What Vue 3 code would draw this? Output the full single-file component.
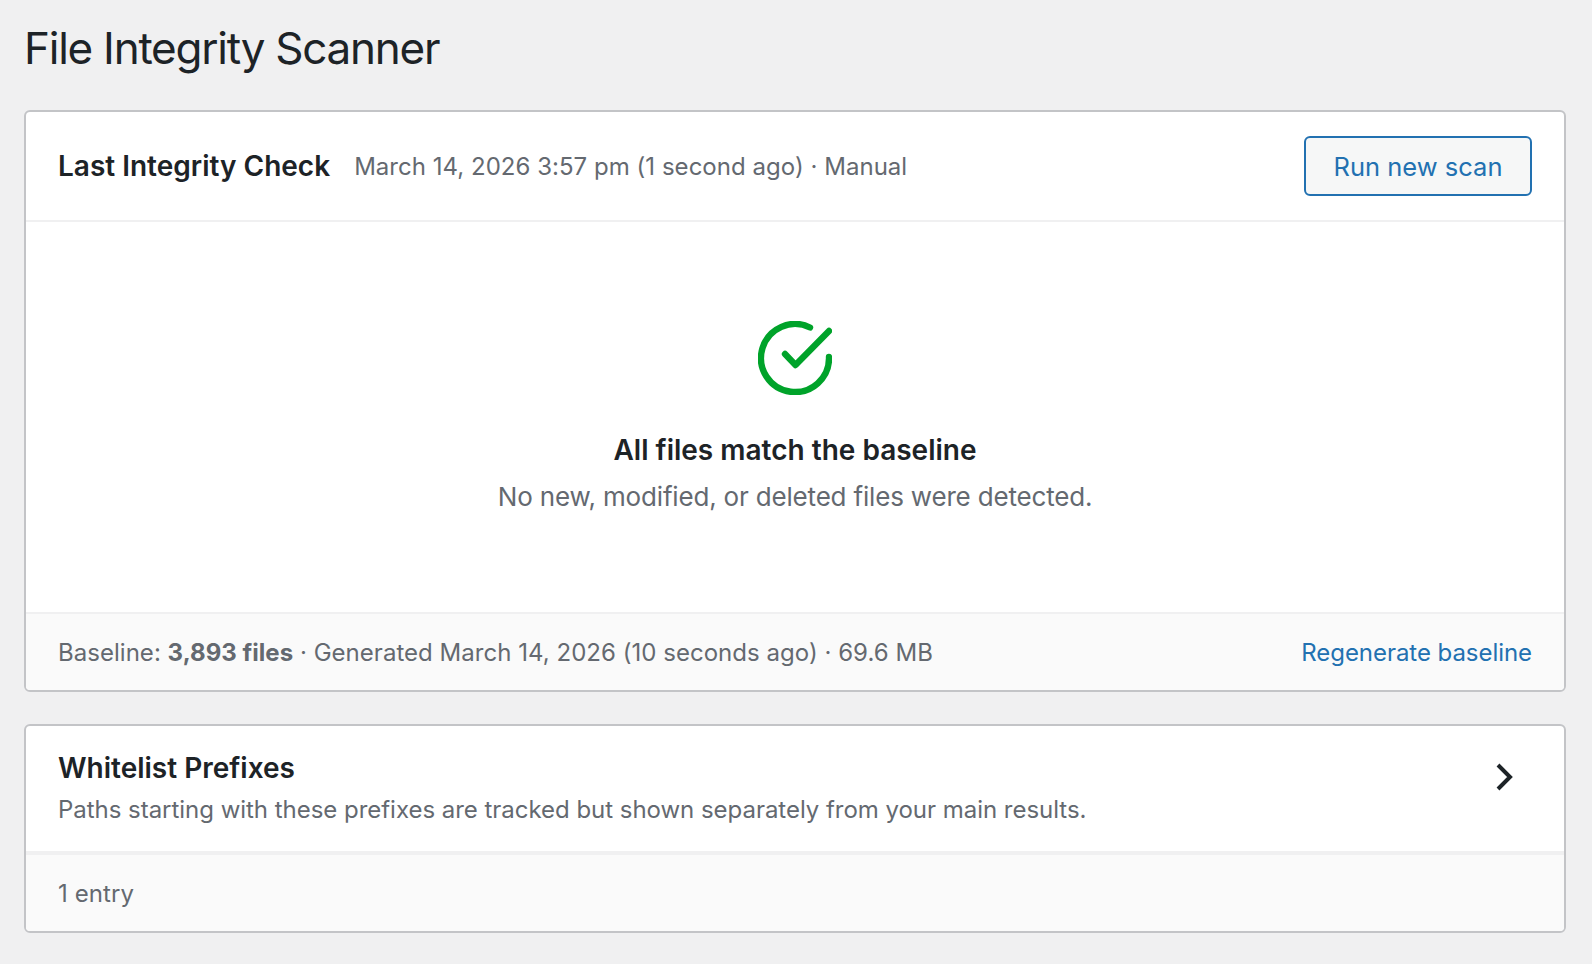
<template>
  <div class="page">
    <h1 class="page-title">File Integrity Scanner</h1>

    <section class="card">
      <header class="scan-head">
        <h2 class="scan-title">Last Integrity Check</h2>
        <span class="scan-meta">March 14, 2026 3:57 pm (1 second ago) · Manual</span>
        <button class="scan-btn" type="button">Run new scan</button>
      </header>

      <div class="scan-result">
        <svg class="check" viewBox="0 0 74 74" fill="none" stroke="#00a32a" stroke-width="6.4" stroke-linecap="round" stroke-linejoin="round">
          <path d="M52 6.5A34 34 0 1 0 71 36" />
          <path d="M27 33L37.5 44L71 10" />
        </svg>
        <h3 class="result-title">All files match the baseline</h3>
        <p class="result-text">No new, modified, or deleted files were detected.</p>
      </div>

      <footer class="card-foot">
        <span class="foot-text">Baseline: <strong>3,893 files</strong> · Generated March 14, 2026 (10 seconds ago) · 69.6 MB</span>
        <a class="foot-link" href="#">Regenerate baseline</a>
      </footer>
    </section>

    <section class="card">
      <div class="wl-head">
        <div>
          <h2 class="wl-title">Whitelist Prefixes</h2>
          <p class="wl-text">Paths starting with these prefixes are tracked but shown separately from your main results.</p>
        </div>
        <svg class="chevron" viewBox="0 0 18 28" fill="none" stroke="#1d2327" stroke-width="4">
          <path d="M2 2L14 14L2 26" />
        </svg>
      </div>
      <footer class="wl-foot">1 entry</footer>
    </section>
  </div>
</template>

<script setup>
</script>

<style>
html,
body {
  background: #f0f0f1;
}
</style>

<style scoped>
.page {
  padding: 21px 26px 32px 24px;
  font-family: Inter, "Liberation Sans", sans-serif;
  color: #1d2327;
}
.page-title {
  margin: 0 0 35px;
  font-size: 44px;
  font-weight: 400;
  line-height: 54px;
  letter-spacing: -1.25px;
}
.card {
  border: 2px solid #c3c4c7;
  border-radius: 6px;
  background: #fff;
  overflow: hidden;
  margin-bottom: 32px;
}
.scan-head {
  display: flex;
  align-items: center;
  height: 108px;
  padding: 0 32px;
  border-bottom: 2px solid #f0f0f1;
}
.scan-title {
  margin: 0 24px 0 0;
  font-size: 28px;
  font-weight: 600;
}
.scan-meta {
  flex: 1;
  font-size: 24px;
  letter-spacing: 0.03px;
  color: #646970;
}
.scan-btn {
  width: 228px;
  height: 60px;
  border: 2px solid #2271b1;
  border-radius: 6px;
  background: #f6f7f7;
  color: #2271b1;
  font: inherit;
  font-size: 25.5px;
}
.scan-result {
  display: flex;
  flex-direction: column;
  align-items: center;
  height: 390px;
  padding-top: 99px;
  box-sizing: border-box;
}
.check {
  width: 74px;
  height: 74px;
}
.result-title {
  margin: 38px 0 0;
  font-size: 28px;
  font-weight: 600;
}
.result-text {
  margin: 14px 0 0;
  font-size: 26px;
  letter-spacing: -0.18px;
  color: #646970;
}
.card-foot {
  display: flex;
  justify-content: space-between;
  align-items: center;
  height: 76px;
  padding: 0 32px;
  border-top: 2px solid #f0f0f1;
  background: #fafafa;
  font-size: 24px;
  color: #646970;
}
.foot-text {
  letter-spacing: 0.03px;
}
.foot-link {
  letter-spacing: -0.05px;
  color: #2271b1;
  text-decoration: none;
}
.wl-head {
  display: flex;
  justify-content: space-between;
  height: 125px;
  padding: 25px 50px 0 32px;
  box-sizing: border-box;
}
.wl-title {
  margin: 0;
  font-size: 28px;
  font-weight: 600;
}
.wl-text {
  margin: 10px 0 0;
  font-size: 24px;
  letter-spacing: -0.03px;
  color: #646970;
}
.chevron {
  width: 18px;
  height: 28px;
  margin-top: 12px;
}
.wl-foot {
  display: flex;
  align-items: center;
  height: 76px;
  padding: 0 32px;
  border-top: 4px solid #f0f0f1;
  background: #fafafa;
  font-size: 24px;
  letter-spacing: 0.1px;
  color: #646970;
}
</style>
